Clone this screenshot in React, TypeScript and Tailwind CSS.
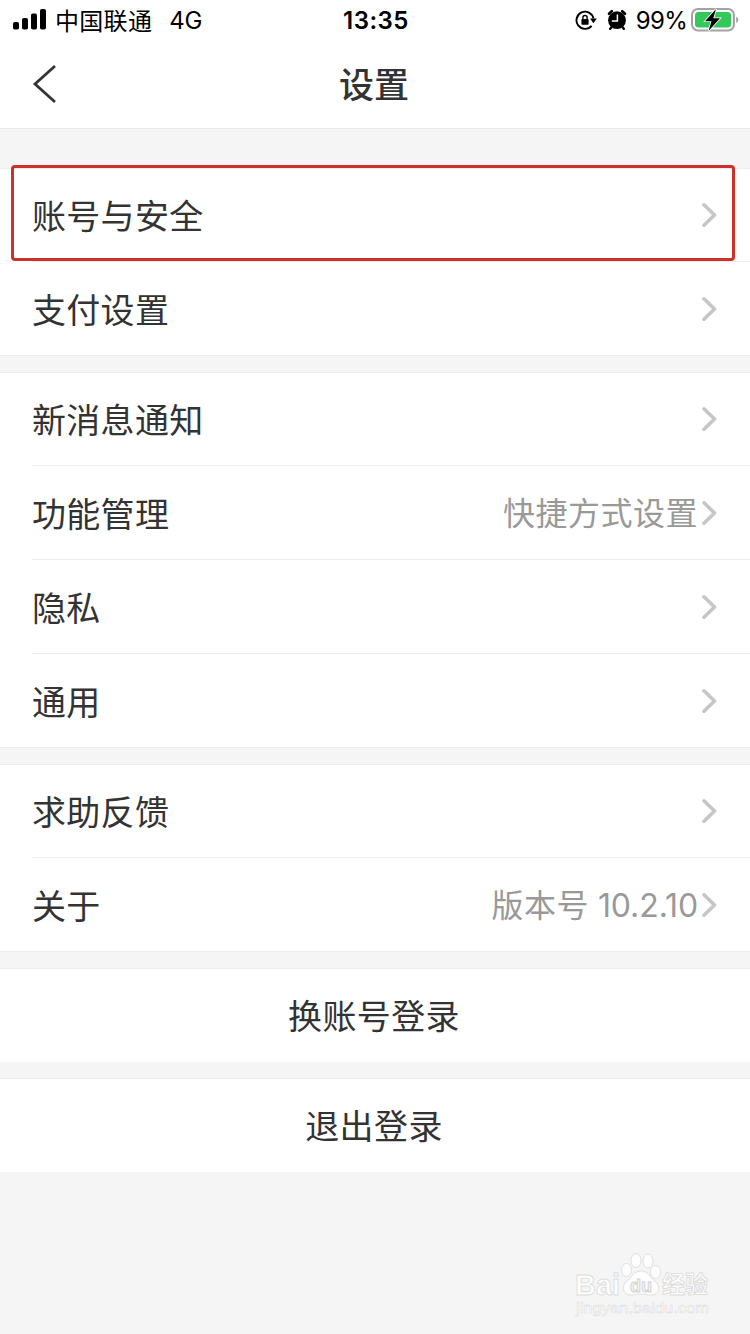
interface RowProps {
  label: string;
  value?: string;
  version?: string;
  highlighted?: boolean;
}

const groups: RowProps[][] = [
  [{ label: "账号与安全", highlighted: true }, { label: "支付设置" }],
  [
    { label: "新消息通知" },
    { label: "功能管理", value: "快捷方式设置" },
    { label: "隐私" },
    { label: "通用" },
  ],
  [{ label: "求助反馈" }, { label: "关于", value: "版本号", version: "10.2.10" }],
];

const actions = ["换账号登录", "退出登录"];

function StatusBar() {
  return (
    <div className="flex h-10 items-center text-black">
      <div className="flex flex-1 items-center pl-[13px]">
        <svg width="34" height="22" viewBox="0 0 34 22" fill="currentColor">
          <rect x="0" y="13" width="6" height="7.5" rx="1.8" />
          <rect x="9" y="9" width="6" height="11.5" rx="1.8" />
          <rect x="18" y="4.5" width="6" height="16" rx="1.8" />
          <rect x="27" y="0" width="6" height="20.5" rx="1.8" />
        </svg>
        <span className="ml-2 pt-[3px] text-[24px] leading-none tracking-[0.3px]">中国联通</span>
        <span className="ml-[17px] pt-[2px] text-[24px] leading-none tracking-[-0.3px]">4G</span>
      </div>
      <span className="pt-[2px] text-[24px] leading-none font-semibold tracking-[0.5px]">13:35</span>
      <div className="flex flex-1 items-center justify-end pr-[11px]">
        {/* Rotation lock */}
        <svg width="22" height="22" viewBox="0 0 22 22" fill="none">
          <path d="M16.6 16.900A8.600 8.600 0 1 1 18.500 9.500" stroke="currentColor" strokeWidth="1.900" />
          <path d="M15 9.500h6.800l-3.400 4.800z" fill="currentColor" />
          <rect x="6.400" y="10" width="7.200" height="5.800" rx="0.800" fill="currentColor" />
          <path d="M7.900 10.500V8.600a2.100 2.100 0 0 1 4.200 0v1.900" stroke="currentColor" strokeWidth="1.400" />
        </svg>
        {/* Alarm */}
        <svg className="ml-[10px]" width="20" height="22" viewBox="0 0 20 22" fill="none">
          <circle cx="10" cy="11.2" r="8.900" fill="currentColor" />
          <path d="M2 4.800 4.800 2.200M15.200 2.200 18 4.800" stroke="currentColor" strokeWidth="2.600" strokeLinecap="round" />
          <path d="M4.400 18.200 3.200 19.800M15.600 18.200l1.200 1.600" stroke="currentColor" strokeWidth="2.400" strokeLinecap="round" />
          <path d="M10.400 5.500v6.600H4.800" stroke="white" strokeWidth="1.500" />
        </svg>
        <span className="ml-[9px] pt-[2px] text-[24px] leading-none tracking-[-0.7px]">99%</span>
        <svg className="ml-[3px]" width="49" height="26" viewBox="0 0 49 26" fill="none">
          <rect x="2" y="2" width="42" height="21.5" rx="6" stroke="#a3a3a3" strokeWidth="2" />
          <rect x="5" y="5" width="36" height="15.5" rx="3.5" fill="#34c759" />
          <path d="M46.200 9.500c1.600.8 2.100 2 2.100 3.200s-.5 2.400-2.100 3.200z" fill="#a3a3a3" />
          <path d="M26 2 15 14.200h6.500L18.500 24 30 11.200h-6.700z" fill="black" stroke="white" strokeWidth="1.600" paintOrder="stroke" />
        </svg>
      </div>
    </div>
  );
}

function Chevron() {
  return (
    <svg width="16" height="26" viewBox="0 0 16 26" fill="none">
      <path d="M3 2.800 13.500 13 3 23.200" stroke="#c6c6c6" strokeWidth="3.600" strokeLinecap="round" strokeLinejoin="round" />
    </svg>
  );
}

function Row({ label, value, version, highlighted }: RowProps) {
  return (
    <div className="relative ml-8 flex h-[94px] items-center justify-between border-b border-[#ececec] pr-[33px] first:h-[93px] last:h-[93px] last:border-b-0">
      <span className="pt-1 text-[34px] leading-[48px] tracking-[0.3px]">{label}</span>
      <span className="flex items-center text-[32px] leading-[48px] tracking-[0.5px] text-[#999999]">
        {value && (
          <span className="mr-[3px] pt-0.5">
            {value}
            {version && <span className="tracking-[-0.1px]"> {version}</span>}
          </span>
        )}
        <Chevron />
      </span>
      {highlighted && (
        <div className="absolute -top-1 right-[15px] -left-[21px] h-24 rounded-[4px] border-3 border-[#cd3129]" />
      )}
    </div>
  );
}

function Watermark() {
  return (
    <div className="absolute top-[1250px] left-[574px] w-[140px]">
      <svg width="140" height="72" viewBox="0 0 140 72" fill="#fdfdfd" stroke="#dcdcdc" strokeWidth="0.900">
        <text x="1" y="45" className="font-['Liberation_Sans',sans-serif]" fontSize="30" fontWeight="700" textLength="45" lengthAdjust="spacingAndGlyphs">Bai</text>
        <ellipse cx="52.500" cy="20" rx="5" ry="6.500" />
        <ellipse cx="62" cy="10.500" rx="5" ry="7" />
        <ellipse cx="74" cy="11" rx="5" ry="7" />
        <ellipse cx="81.500" cy="22" rx="5.200" ry="6.500" />
        <path d="M67 21c-8 0-9 7-15 11-5 5-3 13 5 13 4 0 6-1 10-1s6 1 10 1c8 0 10-8 5-13-6-4-7-11-15-11z" />
        <text x="56" y="42" className="font-['Liberation_Sans',sans-serif]" fontSize="18" fontWeight="700" fill="#f5f5f5" stroke="#d2d2d2" textLength="22" lengthAdjust="spacingAndGlyphs">du</text>
        <text x="88" y="43" fontSize="24" fontWeight="700" textLength="46" lengthAdjust="spacingAndGlyphs">经验</text>
        <text x="2" y="63" className="font-['Liberation_Sans',sans-serif]" fontSize="15" strokeWidth="0.500" textLength="133" lengthAdjust="spacingAndGlyphs">jingyan.baidu.com</text>
      </svg>
    </div>
  );
}

export default function App() {
  return (
    <div className="relative h-[1334px] w-[750px] overflow-hidden bg-[#f5f5f5] font-['Inter','Noto_Sans_CJK_SC',sans-serif] text-[#333333]">
      <header className="h-[129px] border-b border-[#e9e9e9] bg-white">
        <StatusBar />
        <div className="relative flex h-[88px] items-center justify-center">
          <svg className="absolute top-6 left-8" width="26" height="40" viewBox="0 0 26 40" fill="none">
            <path d="M23 2 3 20l20 18" stroke="#333333" strokeWidth="2.800" />
          </svg>
          <h1 className="pt-[3px] pr-[2px] text-[35px] leading-none font-medium">设置</h1>
        </div>
      </header>

      <main className="mt-[39px] flex flex-col gap-4">
        {groups.map((rows, i) => (
          <section key={i} className="border-y border-[#ececec] bg-white">
            {rows.map((row) => (
              <Row key={row.label} {...row} />
            ))}
          </section>
        ))}
        {actions.map((action) => (
          <button
            key={action}
            className="h-[94px] border-t border-[#ececec] bg-white pt-px pr-[2px] text-[34px] tracking-[0.4px]"
          >
            {action}
          </button>
        ))}
      </main>
      <Watermark />
    </div>
  );
}
